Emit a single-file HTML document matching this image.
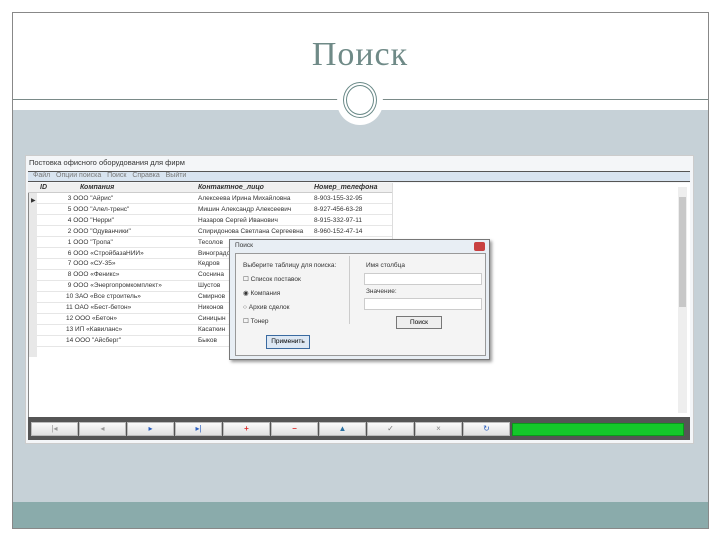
<!DOCTYPE html>
<html><head><meta charset="utf-8"><style>
*{margin:0;padding:0;box-sizing:border-box}
body{width:720px;height:540px;background:#fff;position:relative;overflow:hidden;font-family:"Liberation Sans",sans-serif}
.a{position:absolute}
.t{font-size:7px;color:#333;white-space:nowrap}
.btn{position:absolute;top:422px;width:47px;height:14px;background:linear-gradient(#fafafa,#e0e0e0);border:1px solid #bbb;font-size:8px;text-align:center;line-height:12px}
</style></head><body>
<div class="a" style="left:12px;top:12px;width:697px;height:517px;border:1px solid #888"></div>
<div class="a" style="left:0;width:720px;text-align:center;font-family:'Liberation Serif',serif;font-size:34px;color:#6f8a87;letter-spacing:1px;top:36px">Поиск</div>
<div class="a" style="left:13px;top:99px;width:695px;height:1px;background:#7a8a88"></div>
<div class="a" style="left:13px;top:110px;width:695px;height:392px;background:#c6d1d7"></div>
<div class="a" style="left:13px;top:502px;width:695px;height:26px;background:#8aabab"></div>
<div class="a" style="left:337px;top:79px;width:46px;height:46px;border-radius:50%;background:#fff"></div>
<div class="a" style="left:343px;top:82px;width:34px;height:36px;border-radius:50%;border:4px double #6a8a88"></div>
<!-- app window -->
<div class="a" style="left:25px;top:155px;width:669px;height:289px;background:#f4f6f8;border:1px solid #ccc"></div>
<div class="a t" style="left:29px;top:158px;font-size:7.5px">Постовка офисного оборудования для фирм</div>
<div class="a" style="left:28px;top:171px;width:662px;height:11px;background:#d8e4f0;border-top:1px solid #555;border-bottom:1px solid #555"></div>
<div class="a t" style="left:33px;top:172px;color:#777">Файл &nbsp; Опции поиска &nbsp; Поиск &nbsp; Справка &nbsp; Выйти</div>
<div class="a" style="left:28px;top:183px;width:662px;height:234px;background:#fff;border-left:1px solid #888"></div>
<div class="a" style="left:28px;top:183px;width:364px;height:10px;background:#f0f0f0;border-bottom:1px solid #ccc"></div>
<div class="a" style="left:37px;top:193px;width:355px;height:164px;background:repeating-linear-gradient(to bottom,transparent 0,transparent 10px,#e6e6e6 10px,#e6e6e6 11px)"></div>
<div class="a t" style="left:40px;top:184px;font-weight:bold;font-style:italic">ID</div>
<div class="a t" style="left:80px;top:184px;font-weight:bold;font-style:italic">Компания</div>
<div class="a t" style="left:198px;top:184px;font-weight:bold;font-style:italic">Контактное_лицо</div>
<div class="a t" style="left:314px;top:184px;font-weight:bold;font-style:italic">Номер_телефона</div>
<div class="a" style="left:29px;top:193px;width:8px;height:164px;background:#e8e8e8"></div>
<div class="a t" style="left:31px;top:197px;font-size:6px">▶</div>
<div class="a" style="left:678px;top:187px;width:9px;height:226px;background:#eee"></div>
<div class="a" style="left:679px;top:197px;width:7px;height:110px;background:#c8c8c8"></div>
<div class="a" style="left:66px;top:194px;line-height:10.9px" >
<div class="t" style="font-size:6.5px">&nbsp;3 ООО "Айрис"<br>&nbsp;5 ООО "Алел-тренс"<br>&nbsp;4 ООО "Нерри"<br>&nbsp;2 ООО "Одуванчики"<br>&nbsp;1 ООО "Тропа"<br>&nbsp;6 ООО «СтройбазаНИИ»<br>&nbsp;7 ООО «СУ-35»<br>&nbsp;8 ООО «Феникс»<br>&nbsp;9 ООО «Энергопромкомплект»<br>10 ЗАО «Все строитель»<br>11 ОАО «Бест-бетон»<br>12 ООО «Бетон»<br>13 ИП «Кавиланс»<br>14 ООО "Айсберг"</div></div>
<div class="a t" style="left:198px;top:194px;line-height:10.9px;font-size:6.5px">Алексеева Ирина Михайловна<br>Мишин Александр Алексеевич<br>Назаров Сергей Иванович<br>Спиридонова Светлана Сергеевна<br>Тесолов<br>Виноградов<br>Кедров<br>Соснина<br>Шустов<br>Смирнов<br>Никонов<br>Синицын<br>Касаткин<br>Быков</div>
<div class="a t" style="left:314px;top:194px;line-height:10.9px;font-size:6.5px">8-903-155-32-95<br>8-927-456-63-28<br>8-915-332-97-11<br>8-960-152-47-14</div>
<div class="a" style="left:392px;top:183px;width:1px;height:174px;background:#ddd"></div>
<!-- toolbar -->
<div class="a" style="left:28px;top:417px;width:662px;height:23px;background:#555"></div>
<div class="btn" style="left:31px;color:#999">|◂</div>
<div class="btn" style="left:79px;color:#999">◂</div>
<div class="btn" style="left:127px;color:#2a5fc0">▸</div>
<div class="btn" style="left:175px;color:#2a5fc0">▸|</div>
<div class="btn" style="left:223px;color:#d33;font-weight:bold">+</div>
<div class="btn" style="left:271px;color:#d33;font-weight:bold">−</div>
<div class="btn" style="left:319px;color:#2a70a0">▲</div>
<div class="btn" style="left:367px;color:#777">✓</div>
<div class="btn" style="left:415px;color:#888">×</div>
<div class="btn" style="left:463px;color:#2a5fc0">↻</div>
<div class="a" style="left:512px;top:423px;width:172px;height:13px;background:#14c82a;border:1px solid #0a9a1a"></div>
<!-- dialog -->
<div class="a" style="left:229px;top:239px;width:261px;height:121px;background:#e8eef4;border:1px solid #777;box-shadow:2px 2px 3px rgba(0,0,0,.4)"></div>
<div class="a t" style="left:235px;top:242px;font-size:6.5px">Поиск</div>
<div class="a" style="left:474px;top:242px;width:11px;height:9px;background:#c84040;border-radius:2px"></div>
<div class="a" style="left:235px;top:253px;width:251px;height:103px;background:#f4f4f4;border:1px solid #999"></div>
<div class="a" style="left:240px;top:256px;width:110px;height:68px;border-right:1px solid #ccc"></div>
<div class="a t" style="left:243px;top:262px;font-size:6.5px">Выберите таблицу для поиска:</div>
<div class="a t" style="left:243px;top:273px;font-size:6.5px;line-height:14px">☐ Список поставок<br>◉ Компания<br>○ Архив сделок<br>☐ Тонер</div>
<div class="a t" style="left:366px;top:262px;font-size:6.5px">Имя столбца</div>
<div class="a" style="left:364px;top:273px;width:118px;height:12px;background:#fff;border:1px solid #ccc"></div>
<div class="a t" style="left:366px;top:288px;font-size:6.5px">Значение:</div>
<div class="a" style="left:364px;top:298px;width:118px;height:12px;background:#fff;border:1px solid #ccc"></div>
<div class="a" style="left:396px;top:316px;width:46px;height:13px;background:#eee;border:1px solid #777;font-size:6.5px;text-align:center;line-height:11px">Поиск</div>
<div class="a" style="left:266px;top:335px;width:44px;height:14px;background:#dde8f4;border:1px solid #3a6aa0;font-size:6.5px;text-align:center;line-height:12px">Применить</div>
</body></html>
